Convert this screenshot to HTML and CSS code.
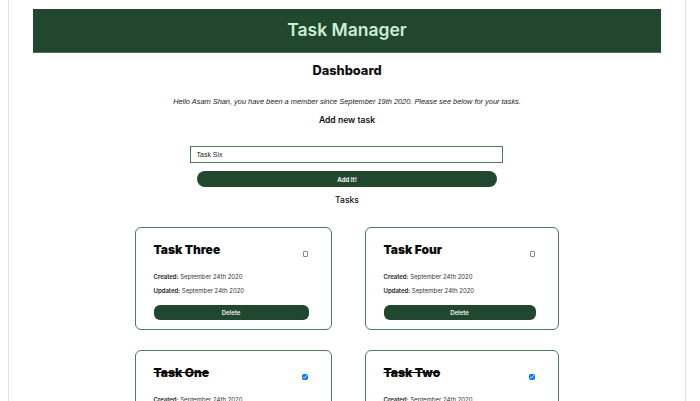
FILE: index.html
```html
<!DOCTYPE html>
<html>
<head>
<meta charset="utf-8">
<link rel="stylesheet" href="styles.css">
</head>
<body>
<div class="frame">
  <header class="topbar"><h1 class="brand">Task Manager</h1></header>
  <main class="main">
    <h2 class="dash">Dashboard</h2>
    <p class="greet">Hello Asam Shan, you have been a member since September 19th 2020. Please see below for your tasks.</p>
    <h3 class="sub">Add new task</h3>
    <form class="addform">
      <input class="task-input" type="text" value="Task Six">
      <button class="add-btn" type="button">Add It!</button>
    </form>
    <h3 class="sub tasks-h">Tasks</h3>
    <div class="grid">
      <div class="card">
        <div class="card-top"><h4 class="card-title">Task Three</h4><input class="chk" type="checkbox"></div>
        <p class="meta"><b>Created:</b> September 24th 2020</p>
        <p class="meta"><b>Updated:</b> September 24th 2020</p>
        <button class="del-btn" type="button">Delete</button>
      </div>
      <div class="card">
        <div class="card-top"><h4 class="card-title">Task Four</h4><input class="chk" type="checkbox"></div>
        <p class="meta"><b>Created:</b> September 24th 2020</p>
        <p class="meta"><b>Updated:</b> September 24th 2020</p>
        <button class="del-btn" type="button">Delete</button>
      </div>
      <div class="card">
        <div class="card-top"><h4 class="card-title done">Task One</h4><input class="chk" type="checkbox" checked></div>
        <p class="meta"><b>Created:</b> September 24th 2020</p>
        <p class="meta"><b>Updated:</b> September 24th 2020</p>
        <button class="del-btn" type="button">Delete</button>
      </div>
      <div class="card">
        <div class="card-top"><h4 class="card-title done">Task Two</h4><input class="chk" type="checkbox" checked></div>
        <p class="meta"><b>Created:</b> September 24th 2020</p>
        <p class="meta"><b>Updated:</b> September 24th 2020</p>
        <button class="del-btn" type="button">Delete</button>
      </div>
    </div>
  </main>
</div>
</body>
</html>
```
FILE: styles.css
```css
html, body { margin: 0; padding: 0; background: #fff; }
body { font-family: Inter, "Liberation Sans", sans-serif; color: #111; overflow: hidden; height: 401px; }
.frame {
  margin-left: 8px;
  width: 628px;
  padding: 9px 24px 0;
  border-left: 1px solid #e2e2e2;
  border-right: 1px solid #e2e2e2;
  height: 392px;
  overflow: hidden;
}
.topbar {
  background: #21472f;
  height: 43px;
  border-bottom: 1px solid #4f6e58;
  display: flex;
  align-items: center;
  justify-content: center;
}
.brand { margin: 0 0 2px; font-size: 17.5px; font-weight: 600; color: #cdeed5; }
.main { display: flex; flex-direction: column; align-items: center; }
.dash { margin: 10px 0 0; font-size: 12.8px; line-height: 16px; font-weight: 800; }
.greet { margin: 18px 0 0; font-family: "Liberation Sans", sans-serif; font-style: italic; font-size: 7.4px; line-height: 10px; color: #222; }
.sub { margin: 8px 0 0; font-size: 8.6px; line-height: 10px; font-weight: 600; }
.addform { display: flex; flex-direction: column; align-items: center; margin-top: 21px; }
.task-input {
  box-sizing: border-box; width: 313px; height: 17px; margin: 0 2px 0 0;
  border: 1.5px solid #4d7a5b; padding: 0 6px;
  font-family: "Liberation Sans", sans-serif; font-size: 7px; color: #222; outline: none;
}
.add-btn {
  width: 300px; height: 16px; margin-top: 8px; border: none; border-radius: 8px;
  background: #21472f; color: #f2f2f2; font-family: Inter, sans-serif; font-size: 6px; font-weight: 700;
}
.tasks-h { margin-top: 8px; font-weight: 500; }
.grid { display: grid; grid-template-columns: 197px 194px; column-gap: 33px; row-gap: 20px; margin: 22px 1px 0 0; }
.card {
  box-sizing: border-box; height: 103px; border: 1.5px solid #4f7a5c; border-radius: 6px;
  padding: 14px 22px 0 18px; display: flex; flex-direction: column;
}
.card-top { display: flex; justify-content: space-between; align-items: flex-start; }
.card-title { margin: 0; font-size: 12px; line-height: 16px; font-weight: 900; color: #0a0a0a; }
.card-title.done { text-decoration: line-through; }
.chk { width: 6px; height: 6px; margin: 9px 1px 0 0; }
.chk:not(:checked) {
  appearance: none; -webkit-appearance: none; box-sizing: border-box;
  width: 5px; height: 6px; border: 1px solid #8a8a8a; border-radius: 1px; background: #fff;
}
.meta { margin: 0; font-family: Inter, sans-serif; font-size: 6px; line-height: 8px; color: #333; }
.meta:first-of-type { margin-top: 15px; }
.meta + .meta { margin-top: 6px; }
.meta b { font-weight: 600; color: #222; }
.del-btn {
  margin-top: 10px; height: 15px; border: none; border-radius: 6px; background: #21472f;
  color: #f2f2f2; font-family: Inter, sans-serif; font-size: 6px; font-weight: 600; width: 100%;
}
```
